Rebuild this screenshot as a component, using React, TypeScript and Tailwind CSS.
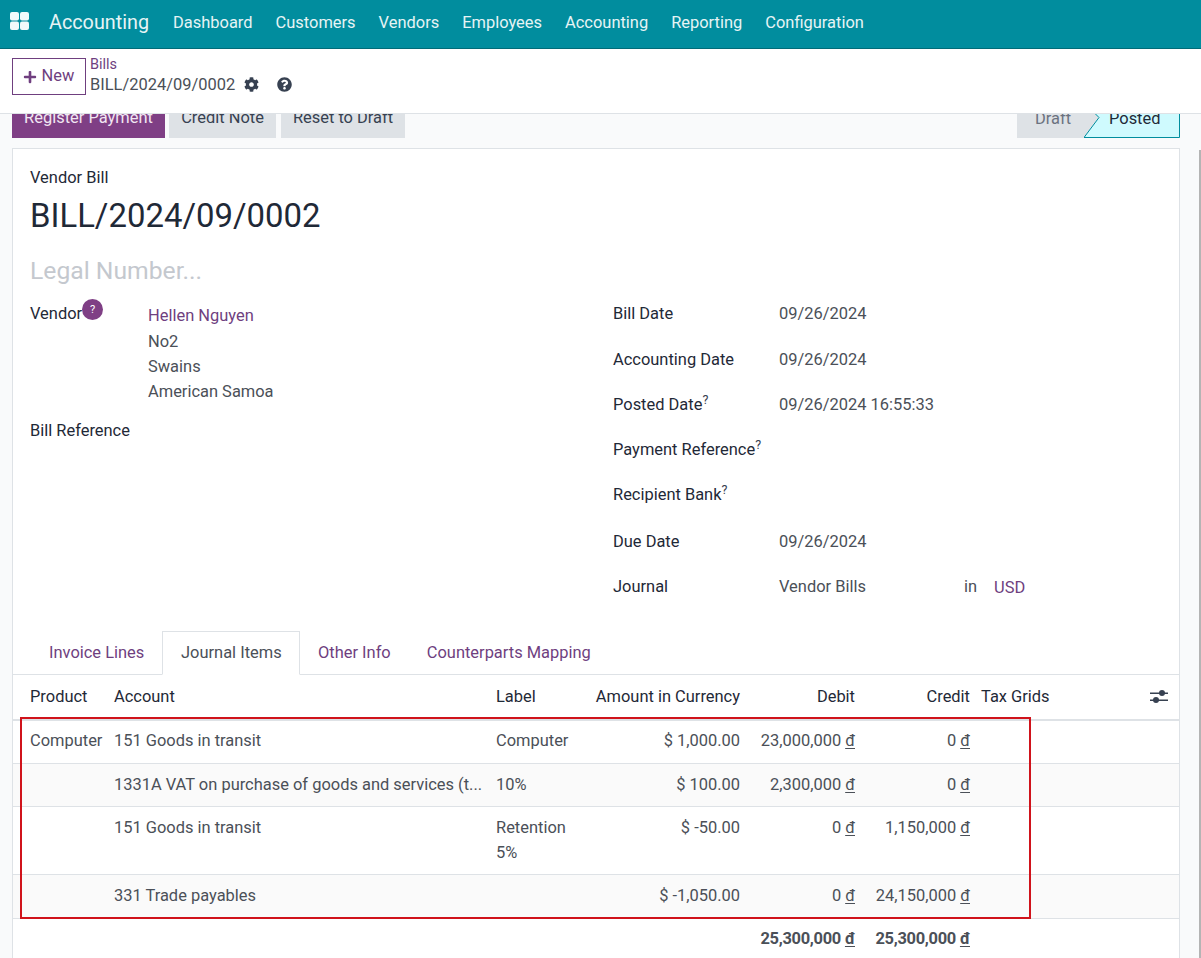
import { FaCog, FaPlus, FaQuestionCircle } from "react-icons/fa"

const navItems = ["Dashboard", "Customers", "Vendors", "Employees", "Accounting", "Reporting", "Configuration"]

const rightFields = [
  { label: "Bill Date", value: "09/26/2024", h: "h-[46px]" },
  { label: "Accounting Date", value: "09/26/2024", h: "h-[45px]" },
  { label: "Posted Date", value: "09/26/2024 16:55:33", help: true, h: "h-[45px]" },
  { label: "Payment Reference", help: true, h: "h-[45px]" },
  { label: "Recipient Bank", help: true, h: "h-[47px]" },
  { label: "Due Date", value: "09/26/2024", h: "h-[45px]" },
]

const rows = [
  { product: "Computer", account: "151 Goods in transit", label: ["Computer"], amount: "$ 1,000.00", debit: "23,000,000", credit: "0", h: "h-[43px]", bg: "bg-white", pad: "pt-[7px]" },
  { account: "1331A VAT on purchase of goods and services (t...", label: ["10%"], amount: "$ 100.00", debit: "2,300,000", credit: "0", h: "h-[43px]", bg: "bg-[#fafafa]", pad: "pt-[8px]" },
  { account: "151 Goods in transit", label: ["Retention", "5%"], amount: "$ -50.00", debit: "0", credit: "1,150,000", h: "h-[68px]", bg: "bg-white", pad: "pt-[8px]" },
  { account: "331 Trade payables", label: [], amount: "$ -1,050.00", debit: "0", credit: "24,150,000", h: "h-[44px]", bg: "bg-[#fafafa]", pad: "pt-[8px]" },
]

function Help() {
  return <sup className="text-[12.5px] leading-none text-[#374151] -top-[6px]">?</sup>
}

function Dong() {
  return <span className="underline underline-offset-2 ml-[4px]">đ</span>
}

export default function App() {
  return (
    <div className="relative h-[958px] w-[1201px] overflow-hidden flex flex-col bg-[#f9fafb] text-[16.45px] text-[#4b5058] font-['Roboto',sans-serif]">
      <nav className="h-[49px] shrink-0 bg-[#018d9e] border-b border-[#016b78] flex items-center pb-[2px]">
        <svg className="ml-[10px] mb-[4px]" width="19" height="19" viewBox="0 0 19 19" fill="#f1fafb">
          <rect x="0" y="0" width="9" height="8.5" rx="2" />
          <rect x="10" y="0" width="9" height="8.5" rx="2" />
          <rect x="0" y="9.5" width="9" height="8.5" rx="2" />
          <rect x="10" y="9.5" width="9" height="8.5" rx="2" />
        </svg>
        <span className="ml-[20px] mr-[24px] text-[19.8px] text-[#e6f4f5]">Accounting</span>
        <div className="flex gap-[23px] text-[#e6f4f5]">
          {navItems.map((item) => (
            <span key={item}>{item}</span>
          ))}
        </div>
      </nav>

      <div className="h-[65px] shrink-0 bg-white border-b border-[#dee2e6] flex items-start pl-3 pt-[9px]">
        <button className="w-[74px] h-[37px] pr-[1px] border border-[#6f3f7f] text-[#6f3f7f] flex items-center justify-center gap-[5px]">
          <FaPlus className="w-[14px] h-[14px]" />
          New
        </button>
        <div className="ml-[4px] flex flex-col leading-none">
          <span className="text-[14.5px] text-[#6f3f7f] mb-[4px]">Bills</span>
          <div className="flex items-center">
            <span>BILL/2024/09/0002</span>
            <FaCog className="ml-[9px] w-[15px] h-[15px] text-[#374151]" />
            <FaQuestionCircle className="ml-[18px] w-[15px] h-[15px] text-[#374151]" />
          </div>
        </div>
      </div>

      <div className="flex-1 min-h-0 overflow-hidden pl-3 pr-[21px]">
        <div className="h-[42px] -mt-[18px] flex items-stretch">
          <button className="w-[153px] pt-[2px] bg-[#7f3f85] text-[#f1e6f2]">Register Payment</button>
          <button className="ml-1 w-[107px] pt-[2px] bg-[#dee2e6] text-[#374151]">Credit Note</button>
          <button className="ml-[5px] w-[124px] pt-[2px] bg-[#dee2e6] text-[#374151]">Reset to Draft</button>
          <div className="ml-auto flex">
            <div className="w-[82px] bg-[#dee2e6] text-[#6b7280] pl-[18px] pt-[11px]">Draft</div>
            <div className="relative w-[96px] -ml-[15px] text-[#1f2937] pl-[25px] pt-[11px]">
              <svg className="absolute left-0 top-0" width="96" height="42" viewBox="0 0 96 42">
                <path d="M0 41.5 L15 21.5 L0 6.5 L0 0 L95.5 0 L95.5 41.5 Z" fill="#cffafe" stroke="#018d9e" />
              </svg>
              <span className="relative">Posted</span>
            </div>
          </div>
        </div>

        <div className="relative mt-[10px] h-[900px] bg-white border border-[#dee2e6]">
          <div className="h-[482px]">
            <div className="pl-[17px] pt-[19px] text-[#1f2937] leading-[20px]">Vendor Bill</div>
            <div className="pl-[17px] mt-[8px] text-[32.9px] leading-[40px] text-[#1f2937]">BILL/2024/09/0002</div>
            <div className="pl-[17px] mt-[20px] text-[24.7px] leading-[30px] text-[#c4c8ce]">Legal Number...</div>

            <div className="flex mt-[16px]">
              <div className="w-[600px] pl-[17px]">
                <div className="flex">
                  <div className="w-[118px] relative text-[#1f2937] leading-[24px]">
                    Vendor
                    <span className="absolute left-[52px] -top-[3px] w-[21px] h-[21px] rounded-full bg-[#7f3f85] text-white text-[11px] leading-[21px] text-center">?</span>
                  </div>
                  <div className="pt-[1px] pb-[1px]">
                    <div className="text-[#6f3f7f] leading-[26px]">Hellen Nguyen</div>
                    <div className="leading-[25px]">No2</div>
                    <div className="leading-[25px]">Swains</div>
                    <div className="leading-[25px]">American Samoa</div>
                  </div>
                </div>
                <div className="mt-[14px] text-[#1f2937] leading-[24px]">Bill Reference</div>
              </div>
              <div className="flex-1">
                {rightFields.map((f) => (
                  <div key={f.label} className={`flex ${f.h}`}>
                    <div className="w-[166px] text-[#1f2937] leading-[24px]">
                      {f.label}
                      {f.help && <Help />}
                    </div>
                    <div className="leading-[24px]">{f.value}</div>
                  </div>
                ))}
                <div className="flex leading-[24px]">
                  <div className="w-[166px] text-[#1f2937]">Journal</div>
                  <div className="w-[185px]">Vendor Bills</div>
                  <div className="w-[30px]">in</div>
                  <div className="text-[#6f3f7f] pt-[1px]">USD</div>
                </div>
              </div>
            </div>
          </div>

          <div className="h-[44px] border-b border-[#dee2e6] flex items-end pl-[18px]">
            <div className="h-[44px] w-[131px] pl-[18px] leading-[45px] text-[#6f3f7f]">Invoice Lines</div>
            <div className="h-[44px] w-[138px] -mb-px pl-[18px] leading-[42px] bg-white border border-[#dee2e6] border-b-white">Journal Items</div>
            <div className="h-[44px] pl-[18px] pr-[18px] leading-[45px] text-[#6f3f7f]">Other Info</div>
            <div className="h-[44px] pl-[18px] leading-[45px] text-[#6f3f7f]">Counterparts Mapping</div>
          </div>

          <div className="grid grid-cols-[92px_382px_90px_172px_115px_115px_1fr] h-[46px] border-b-2 border-[#dee2e6] items-center text-[#1f2937]">
            <div className="pl-[17px]">Product</div>
            <div className="pl-[9px]">Account</div>
            <div className="pl-[9px]">Label</div>
            <div className="text-right pr-[9px] -ml-4">Amount in Currency</div>
            <div className="text-right pr-[9px]">Debit</div>
            <div className="text-right pr-[9px]">Credit</div>
            <div className="flex items-center pl-[2px] pr-[11px] justify-between">
              Tax Grids
              <svg width="18" height="16" viewBox="0 0 18 16" fill="#374151">
                <rect x="0" y="3.5" width="18" height="1.5" />
                <circle cx="12" cy="4" r="3" />
                <rect x="0" y="10.5" width="18" height="1.5" />
                <circle cx="6" cy="11" r="3" />
              </svg>
            </div>
          </div>

          {rows.map((r) => (
            <div key={r.account + r.amount} className={`grid grid-cols-[92px_382px_90px_172px_115px_115px_1fr] ${r.h} ${r.bg} ${r.pad} border-b border-[#dee2e6] leading-[25px]`}>
              <div className="pl-[17px]">{r.product}</div>
              <div className="pl-[9px] whitespace-nowrap">{r.account}</div>
              <div className="pl-[9px]">
                {r.label.map((l) => (
                  <div key={l}>{l}</div>
                ))}
              </div>
              <div className="text-right pr-[9px]">{r.amount}</div>
              <div className="text-right pr-[9px]">
                {r.debit}
                <Dong />
              </div>
              <div className="text-right pr-[9px]">
                {r.credit}
                <Dong />
              </div>
              <div />
            </div>
          ))}

          <div className="grid grid-cols-[92px_382px_90px_172px_115px_115px_1fr] font-bold tracking-[-0.3px] leading-[25px] pt-[7px]">
            <div className="col-start-5 text-right pr-[9px]">
              25,300,000
              <Dong />
            </div>
            <div className="text-right pr-[9px]">
              25,300,000
              <Dong />
            </div>
          </div>

          {/* annotation from the original screenshot */}
          <div className="absolute left-[7px] top-[568px] w-[1011px] h-[202px] border-2 border-[#d0131b] pointer-events-none" />
        </div>
      </div>

      {/* scrollbar sliver at the window edge */}
      <div className="absolute right-0 top-[150px] bottom-0 w-[2px] bg-[#b4b4b4]" />
    </div>
  )
}
